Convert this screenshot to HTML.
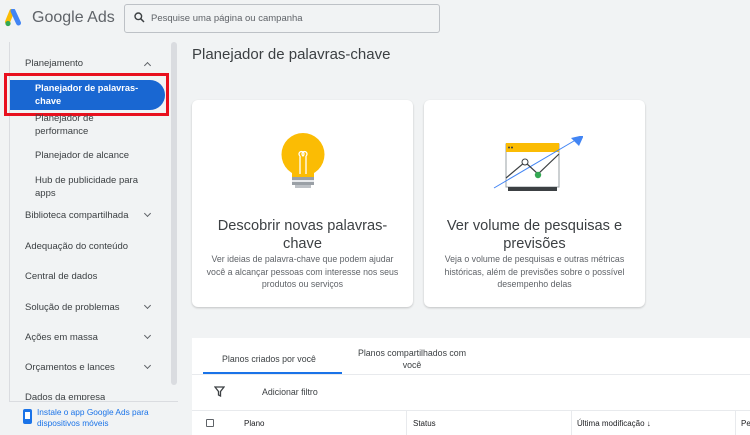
<!DOCTYPE html>
<html><head><meta charset="utf-8"><style>
*{box-sizing:border-box;margin:0;padding:0}
body{width:750px;height:435px;overflow:hidden;background:#f1f3f4;font-family:"Liberation Sans",Arial,sans-serif;color:#3c4043;position:relative}
.abs{position:absolute}
.nav{font-size:9.5px;color:#3c4043;position:absolute;left:25px}
.sub{left:35px}
.chev{position:absolute;left:145px;width:5px;height:5px;border-right:1.2px solid #5f6368;border-bottom:1.2px solid #5f6368;transform:rotate(45deg)}
.card{position:absolute;top:100px;width:221px;height:207px;background:#fff;border-radius:6px;box-shadow:0 1px 2px rgba(0,0,0,.2);text-align:center}
.card h2{font-weight:normal;font-size:14.6px;color:#3c4043;line-height:18px;position:absolute;top:117px;left:0;right:0}
.card p{font-size:8.8px;color:#5f6368;line-height:12.5px;position:absolute;top:153px;left:14px;right:14px}
.th{position:absolute;top:419px;font-size:8px;color:#202124}
</style></head><body>
<svg class="abs" style="left:5px;top:9px" width="20" height="18" viewBox="0 0 20 18">
<path d="M7 2 L2.5 13" stroke="#fbbc04" stroke-width="5" stroke-linecap="round"/>
<path d="M8 2 L13.5 14" stroke="#4285f4" stroke-width="5" stroke-linecap="round"/>
<circle cx="3" cy="14.5" r="2.6" fill="#34a853"/></svg>
<div class="abs" style="left:32px;top:9px;font-size:16px;color:#5f6368">Google Ads</div>
<div class="abs" style="left:124px;top:4px;width:316px;height:29px;border:1px solid #bdc1c6;border-radius:3px;background:#f1f3f4"></div>
<svg class="abs" style="left:134px;top:12px" width="11" height="11" viewBox="0 0 11 11"><circle cx="4.3" cy="4.3" r="3.3" fill="none" stroke="#3c4043" stroke-width="1.4"/><path d="M6.8 6.8L10 10" stroke="#3c4043" stroke-width="1.5"/></svg>
<div class="abs" style="left:151px;top:13px;font-size:9.5px;color:#5f6368">Pesquise uma página ou campanha</div>

<div class="abs" style="left:9px;top:42px;width:1px;height:360px;background:#dadce0"></div>
<div class="abs" style="left:171px;top:42px;width:6px;height:343px;background:#dadce0;border-radius:3px"></div>
<div class="nav" style="top:58px">Planejamento</div>
<div class="chev" style="top:63px;transform:rotate(225deg)"></div>
<div class="abs" style="left:10px;top:80px;width:155px;height:30px;background:#1967d2;border-radius:0 15px 15px 0"></div>
<div class="abs" style="left:4px;top:73px;width:165px;height:43px;border:3px solid #e8101e"></div>
<div class="nav sub" style="top:82px;color:#fff;font-weight:bold;line-height:13px;font-size:9.2px">Planejador de palavras-<br>chave</div>
<div class="nav sub" style="top:112px;line-height:13px">Planejador de<br>performance</div>
<div class="nav sub" style="top:150px">Planejador de alcance</div>
<div class="nav sub" style="top:174px;line-height:13px">Hub de publicidade para<br>apps</div>
<div class="nav" style="top:210px">Biblioteca compartilhada</div><div class="chev" style="top:211px"></div>
<div class="nav" style="top:241px">Adequação do conteúdo</div>
<div class="nav" style="top:271px">Central de dados</div>
<div class="nav" style="top:302px">Solução de problemas</div><div class="chev" style="top:303px"></div>
<div class="nav" style="top:332px">Ações em massa</div><div class="chev" style="top:333px"></div>
<div class="nav" style="top:362px">Orçamentos e lances</div><div class="chev" style="top:363px"></div>
<div class="nav" style="top:392px;height:8px;overflow:hidden">Dados da empresa</div>
<div class="abs" style="left:10px;top:401px;width:168px;height:1px;background:#dadce0"></div>
<div class="abs" style="left:23px;top:409px;width:9px;height:15px;background:#1a73e8;border-radius:2px"></div>
<div class="abs" style="left:25px;top:412px;width:5px;height:7px;background:#fff"></div>
<div class="abs" style="left:37px;top:407px;font-size:8.3px;line-height:11px;color:#1a73e8">Instale o app Google Ads para<br>dispositivos móveis</div>

<div class="abs" style="left:192px;top:46px;font-size:15px;color:#3c4043">Planejador de palavras-chave</div>

<div class="card" style="left:192px">
<svg class="abs" style="left:88px;top:32px" width="46" height="62" viewBox="0 0 46 62">
<circle cx="23" cy="22.5" r="21.5" fill="#fbbc04"/><rect x="12" y="30" width="22" height="15" fill="#fbbc04"/>
<path d="M20 42V24 M26 42V24 M20 24a2.5 2.5 0 1 1 3 0 a2.5 2.5 0 1 1 3 0" stroke="#fff" stroke-width="1.3" fill="none"/>
<rect x="12" y="45" width="22" height="3" fill="#9aa0a6"/><rect x="12" y="48" width="22" height="2" fill="#e8eaed"/><rect x="12" y="50" width="22" height="3" fill="#9aa0a6"/><rect x="15" y="53" width="16" height="3" fill="#bdc1c6"/></svg>
<h2>Descobrir novas palavras-<br>chave</h2>
<p>Ver ideias de palavra-chave que podem ajudar você a alcançar pessoas com interesse nos seus produtos ou serviços</p></div>

<div class="card" style="left:424px">
<svg class="abs" style="left:69px;top:36px" width="90" height="56" viewBox="0 0 90 56">
<rect x="13" y="8" width="53" height="43" fill="#fff" stroke="#9aa0a6" stroke-width="1"/>
<rect x="13" y="7" width="53" height="9" fill="#fbbc04"/>
<circle cx="16" cy="11.5" r="1" fill="#3c4043"/><circle cx="19" cy="11.5" r="1" fill="#3c4043"/>
<rect x="15" y="51" width="49" height="4" fill="#3c4043"/>
<path d="M1 52 L86 2" stroke="#4285f4" stroke-width="1"/><path d="M91 -1 L78 2 L86 10Z" fill="#4285f4"/>
<path d="M13 42 L32 26 L45 38 L66 18" stroke="#3c4043" stroke-width="1.2" fill="none"/>
<circle cx="32" cy="26" r="3" fill="#fff" stroke="#3c4043" stroke-width="1"/><circle cx="45" cy="39" r="3.2" fill="#34a853"/></svg>
<h2>Ver volume de pesquisas e<br>previsões</h2>
<p style="left:12px;right:12px">Veja o volume de pesquisas e outras métricas históricas, além de previsões sobre o possível desempenho delas</p></div>

<div class="abs" style="left:192px;top:338px;width:558px;height:97px;background:#fff"></div>
<div class="abs" style="left:222px;top:354px;font-size:8.8px;color:#3c4043">Planos criados por você</div>
<div class="abs" style="left:342px;top:347px;width:140px;font-size:8.8px;color:#3c4043;text-align:center;line-height:12px">Planos compartilhados com<br>você</div>
<div class="abs" style="left:192px;top:374px;width:558px;height:1px;background:#e8eaed"></div>
<div class="abs" style="left:203px;top:372px;width:139px;height:2px;background:#1a73e8"></div>
<svg class="abs" style="left:214px;top:386px" width="11" height="11" viewBox="0 0 11 11"><path d="M1 1H10L6.5 5.5V10L4.5 9V5.5Z" fill="none" stroke="#3c4043" stroke-width="1.3"/></svg>
<div class="abs" style="left:262px;top:387px;font-size:8.8px;color:#3c4043">Adicionar filtro</div>
<div class="abs" style="left:192px;top:410px;width:558px;height:1px;background:#e8eaed"></div>
<div class="abs" style="left:206px;top:419px;width:8px;height:8px;border:1.2px solid #5f6368;border-radius:1px"></div>
<div class="th" style="left:244px">Plano</div>
<div class="abs" style="left:406px;top:411px;width:1px;height:24px;background:#e8eaed"></div>
<div class="th" style="left:413px">Status</div>
<div class="abs" style="left:571px;top:411px;width:1px;height:24px;background:#e8eaed"></div>
<div class="th" style="left:577px">Última modificação ↓</div>
<div class="abs" style="left:735px;top:411px;width:1px;height:24px;background:#e8eaed"></div>
<div class="th" style="left:741px">Pe</div>
</body></html>
